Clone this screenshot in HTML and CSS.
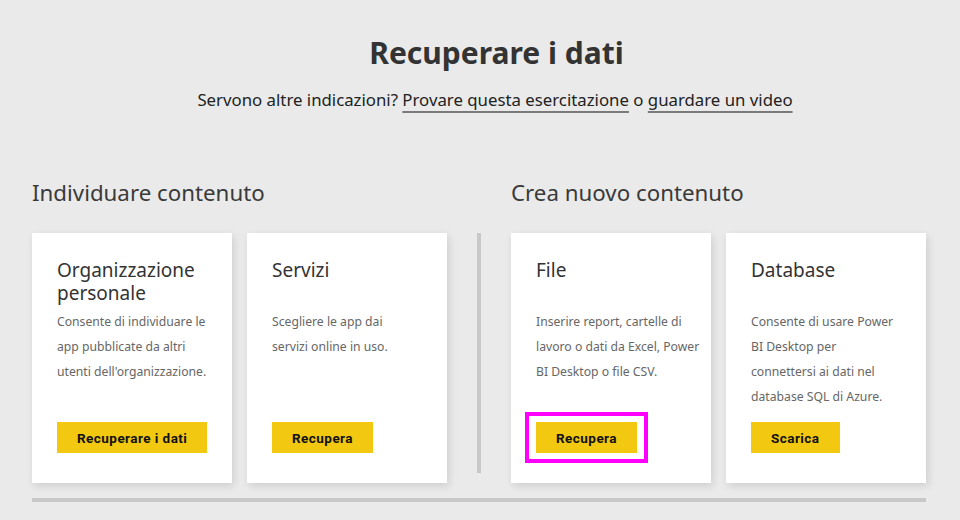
FILE: index.html
```html
<!DOCTYPE html>
<html lang="it">
<head>
<meta charset="utf-8">
<title>Recuperare i dati</title>
<link rel="stylesheet" href="styles.css">
</head>
<body>
<div class="page">
  <header class="hero">
    <h1 class="hero-title">Recuperare i dati</h1>
    <p class="hero-sub">Servono altre indicazioni? <a class="link" href="#">Provare questa esercitazione</a> o <a class="link" href="#">guardare un video</a></p>
  </header>
  <main class="sections">
    <h2 class="section-title">Individuare contenuto</h2>
    <h2 class="section-title right">Crea nuovo contenuto</h2>
    <div class="cards">
      <div class="card">
        <h3 class="card-title">Organizzazione personale</h3>
        <p class="card-desc">Consente di individuare le<br>app pubblicate da altri<br>utenti dell'organizzazione.</p>
        <div class="card-action"><button class="btn">Recuperare i dati</button></div>
      </div>
      <div class="card">
        <h3 class="card-title">Servizi</h3>
        <p class="card-desc">Scegliere le app dai<br>servizi online in uso.</p>
        <div class="card-action"><button class="btn">Recupera</button></div>
      </div>
    </div>
    <div class="divider"></div>
    <div class="cards">
      <div class="card">
        <h3 class="card-title">File</h3>
        <p class="card-desc">Inserire report, cartelle di<br>lavoro o dati da Excel, Power<br>BI Desktop o file CSV.</p>
        <div class="card-action"><button class="btn highlighted">Recupera</button></div>
      </div>
      <div class="card">
        <h3 class="card-title">Database</h3>
        <p class="card-desc">Consente di usare Power<br>BI Desktop per<br>connettersi ai dati nel<br>database SQL di Azure.</p>
        <div class="card-action"><button class="btn">Scarica</button></div>
      </div>
    </div>
  </main>
  <div class="bottom-rule"></div>
</div>
</body>
</html>
```
FILE: styles.css
```css
* { box-sizing: border-box; }
html, body { margin: 0; padding: 0; }
body {
  background: #eaeaea;
  font-family: "Noto Sans", "Open Sans", sans-serif;
  color: #333;
  width: 960px;
  height: 520px;
  overflow: hidden;
}
.page { padding: 0 34px 0 32px; }
.hero { text-align: center; padding-top: 33px; padding-left: 32px; }
.hero-title {
  margin: 0;
  font-size: 30px;
  line-height: 40px;
  font-weight: 700;
  color: #333;
  padding-left: 3px;
}
.hero-sub {
  margin: 15px 0 0;
  font-size: 16.8px;
  line-height: 24px;
  color: #222;
}
.link {
  color: #222;
  text-decoration: underline;
  text-decoration-color: #7a7a7a;
  text-decoration-thickness: 2px;
  text-underline-offset: 5px;
}
.sections {
  margin-top: 65px;
  display: grid;
  grid-template-columns: 415px 4px 415px;
  column-gap: 30px;
}
.section-title {
  margin: 0 0 25px;
  font-size: 22.3px;
  line-height: 31px;
  font-weight: 400;
  color: #3a3a3a;
}
.section-title.right { grid-column: 3; }
.cards { display: flex; gap: 15px; }
.divider {
  background: #c8c8c8;
  height: 240px;
}
.card {
  width: 200px;
  height: 250px;
  background: #fff;
  box-shadow: 2px 3px 8px rgba(0,0,0,0.12);
  padding: 26px 10px 30px 25px;
  display: flex;
  flex-direction: column;
}
.card-title {
  margin: 0;
  font-size: 19px;
  line-height: 23px;
  font-weight: 400;
  color: #333;
  min-height: 46px;
}
.card-desc {
  margin: 4px 0 0;
  font-size: 12.2px;
  line-height: 25px;
  color: #666;
  white-space: nowrap;
}
.card-action { margin-top: auto; display: flex; }
.btn {
  position: relative;
  background: #f2c811;
  border: none;
  height: 31px;
  padding: 0 20px;
  font-family: Roboto, "Liberation Sans", sans-serif;
  font-weight: 700;
  font-size: 13.5px;
  letter-spacing: 0.45px;
  color: #111;
}
.btn.highlighted::after {
  content: "";
  position: absolute;
  top: -10px; bottom: -10px; left: -11px; right: -11px;
  border: 4px solid #ff00ff;
}
.bottom-rule {
  margin-top: 15px;
  height: 4px;
  background: #c8c8c8;
  width: 894px;
}
```
